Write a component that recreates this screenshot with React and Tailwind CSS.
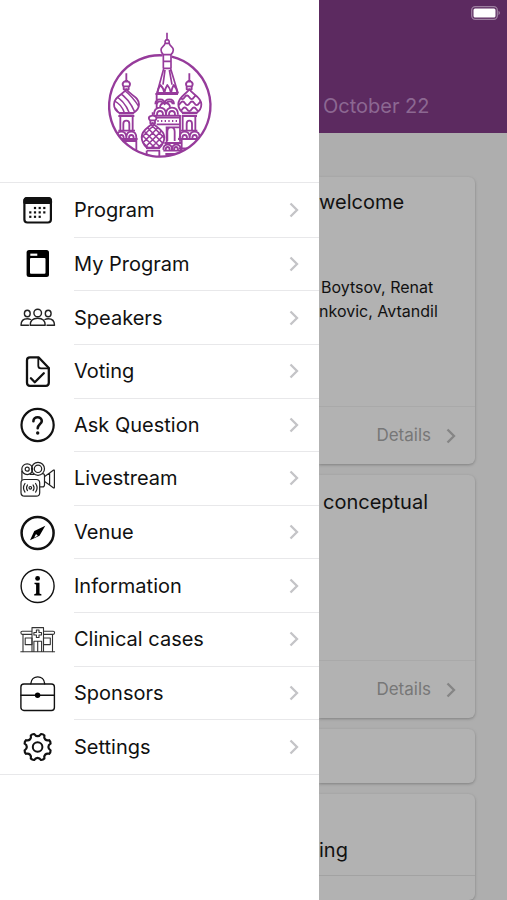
import React from 'react';

// eight rounded teeth around the centre of a 36x36 box
const gearPath = (() => {
  const pts = [];
  const at = (r, deg) => {
    const a = (deg * Math.PI) / 180;
    return `${(17.6 + r * Math.sin(a)).toFixed(2)} ${(18 - r * Math.cos(a)).toFixed(2)}`;
  };
  for (let i = 0; i < 8; i++) {
    const a = i * 45 + 22.5;
    pts.push(`${i === 0 ? 'M' : 'L'}${at(13.4, a - 8)}`);
    pts.push(`Q${at(14.2, a)} ${at(13.4, a + 8)}`);
    pts.push(`C${at(10.2, a + 13)} ${at(10.2, a + 32)} ${at(13.4, a + 37)}`);
  }
  return pts.join('') + 'Z';
})();

function Icon({ children, strokeWidth = 1.5, color = '#111' }) {
  return (
    <svg className="h-9 w-9 shrink-0" viewBox="0 0 36 36" fill="none" stroke={color} strokeWidth={strokeWidth} strokeLinecap="round" strokeLinejoin="round" aria-hidden="true">
      {children}
    </svg>
  );
}

function ProgramIcon() {
  const dots = [[15, 15], [19.7, 15], [24.3, 15], [10.3, 19.4], [15, 19.4], [19.7, 19.4], [24.3, 19.4], [10.3, 23.8], [15, 23.8], [19.7, 23.8]];
  return (
    <Icon strokeWidth={2.2}>
      <rect x="4.4" y="5" width="26.5" height="24.5" rx="3" />
      <path d="M4.4 9.8V8q0-3 3-3H28q3 0 3 3v1.800z" fill="#111" />
      {dots.map(([x, y]) => (
        <rect key={`${x}-${y}`} x={x - 1.1} y={y - 1.1} width="2.2" height="2.2" fill="#111" stroke="none" />
      ))}
    </Icon>
  );
}

function MyProgramIcon() {
  return (
    <Icon>
      <rect x="6.6" y="4" width="22.4" height="27" rx="2.5" fill="#000" stroke="none" />
      <rect x="10" y="12" width="15.5" height="15.7" rx="1" fill="#fff" stroke="none" />
      <rect x="10.3" y="7.6" width="7" height="2.2" fill="#fff" stroke="none" />
    </Icon>
  );
}

function SpeakersIcon() {
  return (
    <Icon strokeWidth={1.4} color="#222">
      <circle cx="17.7" cy="13" r="3.8" />
      <path d="M10.2 25.3c0-4.8 3-7 7.5-7s7.5 2.2 7.5 7z" />
      <ellipse cx="7.3" cy="13.5" rx="2.9" ry="3.3" />
      <ellipse cx="28.2" cy="13.5" rx="2.9" ry="3.3" />
      <path d="M8.5 25.3H1c0-4 2-6.6 6.3-6.6 1.4 0 2.4.3 3.3.8M27 25.3h7.5c0-4-2-6.6-6.3-6.6-1.4 0-2.4.3-3.3.8" />
    </Icon>
  );
}

function VotingIcon() {
  return (
    <Icon strokeWidth={2.3}>
      <path d="M10 3.3h8.5L28.8 14v14.800q0 3-3 3H10q-3 0-3-3V6.300q0-3 3-3z" />
      <path d="M18.300 3.700v8q0 2.700 2.700 2.700h7.800" strokeWidth="1.8" />
      <path d="M10.9 24.3l3.9 4 9-9" />
    </Icon>
  );
}

function QuestionIcon() {
  return (
    <Icon strokeWidth={2.2}>
      <circle cx="17.6" cy="18" r="16.1" />
      <path d="M13.4 14.3c0-5.4 8.4-5.2 8.4-.4 0 3.200-4.100 3.300-4.100 7.400" strokeWidth="2.6" />
      <circle cx="17.7" cy="26" r="1.7" fill="#111" stroke="none" />
    </Icon>
  );
}

function LivestreamIcon() {
  return (
    <Icon strokeWidth={1.2} color="#222">
      <circle cx="7.2" cy="8.2" r="5.4" />
      <circle cx="7.2" cy="8.2" r="2" />
      <circle cx="18" cy="7.8" r="6.5" />
      <circle cx="18" cy="7.8" r="3.7" />
      <path d="M1.9 18.3V10M10.300 13.300h3.800M22.500 12.700q2 0 2 2v9q0 2.200-2 2.200h-2.300" />
      <path d="M24.6 15.4l5-3.300 4-3q.8-.4.8.6v16.600q0 1-.8.6l-4-3-5-3.300M29.600 12.300v11.500" />
      <rect x="1" y="18.5" width="18.7" height="16.7" rx="3.5" />
      <circle cx="10.3" cy="26.8" r="1.3" />
      <path d="M7.500 24q-1.900 2.800 0 5.600M5 22.500q-3 4.300 0 8.600M13.100 24q1.900 2.800 0 5.600M15.600 22.500q3 4.300 0 8.600" />
    </Icon>
  );
}

function VenueIcon() {
  return (
    <Icon strokeWidth={2.5}>
      <circle cx="17.6" cy="18" r="16" />
      <path d="M25.300 10.700L10 25.300l4.300-9.300zM25.300 10.700L19.500 20.800 10 25.300z" fill="#000" stroke="none" />
      <path d="M16 19l1.800 1.800-3.700 2z" fill="#fff" stroke="none" />
    </Icon>
  );
}

function InformationIcon() {
  return (
    <Icon strokeWidth={1.4}>
      <circle cx="17.6" cy="18" r="16.5" />
      <circle cx="17.6" cy="10.4" r="2.4" fill="#000" stroke="none" />
      <path d="M14.500 14.800h5v10.800l1.900.6v1.200h-7.200v-1.200l1.900-.6v-9l-1.600-.6z" fill="#000" stroke="none" />
    </Icon>
  );
}

function ClinicalIcon() {
  return (
    <Icon strokeWidth={1.1} color="#333">
      <path d="M.8 29.700h33.800M12 29.500V5.600h11.500v23.900M12 9.200H2.300q-1.400 0-1.400 1.600t1.400 1.600H12M23.500 9.200h9.700q1.400 0 1.400 1.600t-1.400 1.600h-9.700" />
      <path d="M3 12.600v17M32.500 12.600v17M5.200 16H12v6.600H5.200zM23.500 16h6.800v6.600h-6.800zM13.900 29.500V19.300h7.700v10.200M17.700 19.300v10.200" />
      <path d="M16.400 8H19v2.500h2.500V13H19v2.500h-2.600V13h-2.500v-2.500h2.500z" />
    </Icon>
  );
}

function SponsorsIcon() {
  return (
    <Icon strokeWidth={1.4}>
      <rect x=".9" y="8" width="33.5" height="26.5" rx="3" />
      <path d="M10.800 7.800C11.500-1.400 24-1.400 24.700 7.800M1 19.300h33.300" />
      <circle cx="17.6" cy="19.3" r="2.7" fill="#000" stroke="none" />
    </Icon>
  );
}

function SettingsIcon() {
  return (
    <Icon strokeWidth={2.2}>
      <path d={gearPath} />
      <circle cx="17.6" cy="18" r="4.8" strokeWidth="2" />
    </Icon>
  );
}

const menu = [
  { label: 'Program', icon: ProgramIcon },
  { label: 'My Program', icon: MyProgramIcon },
  { label: 'Speakers', icon: SpeakersIcon },
  { label: 'Voting', icon: VotingIcon },
  { label: 'Ask Question', icon: QuestionIcon },
  { label: 'Livestream', icon: LivestreamIcon },
  { label: 'Venue', icon: VenueIcon },
  { label: 'Information', icon: InformationIcon },
  { label: 'Clinical cases', icon: ClinicalIcon },
  { label: 'Sponsors', icon: SponsorsIcon },
  { label: 'Settings', icon: SettingsIcon },
];

function Chevron({ className }) {
  return (
    <svg className={className} viewBox="0 0 10 16" fill="none" stroke="currentColor" strokeWidth="2.3" aria-hidden="true">
      <path d="M1.500 1.500L8 8l-6.500 6.500" />
    </svg>
  );
}

function Logo() {
  return (
    <svg className="h-[140px] w-[130px]" viewBox="3 0 390 420" fill="none" stroke="#963b9b" strokeWidth="5.5" strokeLinejoin="round" role="img" aria-label="Cathedral">
      <defs>
        <clipPath id="disc"><circle cx="195" cy="243" r="152" /></clipPath>
        <clipPath id="domeLeft"><path d="M97 193c-12 18-37 22-37 45 0 12 6 20 16 26h42c10-6 17-14 17-26 0-23-26-27-38-45z" /></clipPath>
        <clipPath id="domeRight"><path d="M286 193c-10 16-33 22-33 45 0 11 5 19 13 25h42c10-6 14-14 14-25 0-23-26-29-36-45z" /></clipPath>
        <clipPath id="domeFront"><path d="M176 294c-8 12-33 20-33 42 0 14 7 24 15 32h39c8-8 14-18 14-32 0-22-27-30-35-42z" /></clipPath>
      </defs>
      <path d="M206 91A152 152 0 1 0 233 95" strokeWidth="7" />

      <g clipPath="url(#disc)">
        {/* left tower */}
        <path d="M97 193c-12 18-37 22-37 45 0 12 6 20 16 26h42c10-6 17-14 17-26 0-23-26-27-38-45z" />
        <g clipPath="url(#domeLeft)" strokeWidth="4.5">
          <path d="M51 224q32 9 42 45M57 210q34 13 51 59M72 201q33 18 52 64M86 192q31 23 51 57M99 187q23 16 42 38M48 241q20 5 28 28" />
        </g>
        <path d="M75 266h44M79 273v43M116 273v43M73 317h50M88 316v-20q0-9 9-9t9 9v20M73 273h48" />
        <path d="M67 339q0-19 15-19t15 19q0-19 15-19t15 19M75 339q0-9 7-9t7 9M105 339q0-9 7-9t7 9M62 342h69M75 350v40M127 344v44M62 348h66" />

        {/* center tower */}
        <path d="M184 207h68M188 210v42M184 238q0-15 14-15t14 15q0-15 14-15t14 15M180 269q0-21 18-21t18 21q0-21 18-21t18 21" />
        <path d="M189 238q0-9 9-9t9 9M218 238q0-9 9-9t9 9M189 269q0-11 9-11t9 11M225 269q0-11 9-11t9 11M198 248q0-14 15-14t15 14M180 272h78M188 278h72M188 298h72M258 270v80M215 307h44M218 307v48M220 348v-28q0-13 11-13t11 13v28M211 354h50" />
        <path d="M190 288h68" strokeDasharray="4 7" />
        <path d="M208 374q0-15 13-15t13 15q0-15 13-15t13 15M215 374q0-8 6-8t6 8M240 374q0-8 6-8t6 8M208 377h54M214 387h48" />

        {/* right tower */}
        <path d="M286 193c-10 16-33 22-33 45 0 11 5 19 13 25h42c10-6 14-14 14-25 0-23-26-29-36-45z" />
        <g clipPath="url(#domeRight)">
          <path d="M258 217q7 11 14 0 7-11 14 0 7 11 14 0 7-11 14 0M245 235q7 11 14 0 7-11 14 0 7 11 14 0 7-11 14 0 7 11 14 0 7-11 14 0M251 253q7 11 14 0 7-11 14 0 7 11 14 0 7-11 14 0 7 11 14 0" />
        </g>
        <path d="M264 265h46M266 273v43M304 273v43M261 317h49M278 316v-20q0-9 8-9t8 9v20M263 273h46" />
        <path d="M257 339q0-19 15-19t15 19q0-19 15-19t15 19M265 339q0-9 7-9t7 9M295 339q0-9 7-9t7 9M252 342h69M263 344v45M307 350v35M255 370h50" />

        {/* front dome */}
        <path d="M176 294c-8 12-33 20-33 42 0 14 7 24 15 32h39c8-8 14-18 14-32 0-22-27-30-35-42z" fill="#fff" />
        <g clipPath="url(#domeFront)" strokeWidth="4.5">
          <path d="M120 340l60-60M126 354l70-70M136 364l70-70M146 374l70-70M160 380l60-60M178 382l50-50M230 340l-60-60M226 354l-70-70M216 364l-70-70M206 374l-70-70M194 380l-60-60M178 384l-50-50" />
        </g>
        <path d="M156 369h42M158 377h38v18M158 377v17" />
      </g>

      {/* spires */}
      <path d="M168 286q-7-8 0-12 8-4 16 0 7 4 0 12zM169 287v8h14v-8M176 262v10" />
      <path d="M88 184q-5-9 2-14h14q7 5 2 14zM89 185v8h15v-8M92 168h10M97 145v21" />
      <path d="M278 184q-5-9 2-14h12q7 5 2 14zM278 185v8h15v-8M281 168h10M286 145v21" />
      <path d="M208 90v40h23V90M208 109h23M208 89c-4-4-7-8-7-14 0-10 11-11 12-20h13c1 9 12 10 12 20 0 6-3 10-7 14zM214 54q-3-8 5-10 9 2 6 10M219 23v20M209 131l-20 74M230 131l22 74M213 135l-6 44M226 135l8 44" strokeWidth="5" />
      <path d="M190 204q2-13 9-24 10 9 12 24 2-13 9-24 8 9 11 24 2-13 8-24 9 9 12 24z" />
    </svg>
  );
}

function Details() {
  return (
    <a href="#details" className="flex h-[58px] items-center justify-end gap-[15px] border-t border-[#a9a9a9] pr-[19px] text-[17px] text-[#777]">
      Details
      <Chevron className="h-4 w-[10px] text-[#858585]" />
    </a>
  );
}

function Card({ className, children }) {
  return (
    <article className={`flex flex-col rounded-r-md bg-[#b2b2b2] shadow-[0_1px_3px_#808080] ${className}`}>
      {children}
    </article>
  );
}

export default function App() {
  return (
    <div className="flex h-screen overflow-hidden bg-[#aeaeae] font-[Inter,'Liberation_Sans',sans-serif] text-[#111]">
      <aside className="w-[319px] shrink-0 bg-white">
        <div className="flex justify-center pt-[25px] pb-[17px]">
          <Logo />
        </div>
        <nav className="grid h-[593px] auto-rows-fr border-y border-[#e8e8ea] pt-px">
          {menu.map(({ label, icon: MenuIcon }, i) => (
            <a key={label} href="#menu" className="flex items-center gap-[18px] pl-5">
              <MenuIcon />
              <span className={`flex h-full flex-1 items-center justify-between pr-5 text-xl ${i < menu.length - 1 ? 'border-b border-[#e8e8ea]' : ''}`}>
                {label}
                <Chevron className="h-4 w-[10px] text-[#c4c4c7]" />
              </span>
            </a>
          ))}
        </nav>
      </aside>

      <main className="flex min-w-0 flex-1 flex-col overflow-hidden whitespace-nowrap">
        <header className="flex h-[133px] shrink-0 flex-col justify-between bg-[#5c2a60] pt-[6px] pb-3">
          <svg className="mr-[6px] h-[14px] w-[30px] self-end" viewBox="0 0 30 14" aria-hidden="true">
            <rect x=".7" y=".7" width="25.6" height="12.6" rx="3.5" fill="none" stroke="#9d7fa0" strokeWidth="1.3" />
            <rect x="2.5" y="2.5" width="22" height="9" rx="1.5" fill="#fff" />
            <path d="M27.500 4.800q3 2.200 0 4.400z" fill="#9d7fa0" />
          </svg>
          <p className="pl-1 text-xl leading-[30px] text-[#8c6892]">October 22</p>
        </header>
        <section className="flex flex-1 flex-col gap-[11px] pt-11 pr-8">
          <Card className="h-[287px] shrink-0 justify-between">
            <div>
              <h2 className="pt-[10px] text-xl leading-[30px]">welcome</h2>
              <p className="pt-[58px] pl-[2px] text-base leading-6">Boytsov, Renat</p>
              <p className="text-base leading-6">nkovic, Avtandil</p>
            </div>
            <Details />
          </Card>
          <Card className="h-[243px] shrink-0 justify-between">
            <h2 className="pt-3 pl-1 text-xl leading-[30px]">conceptual</h2>
            <Details />
          </Card>
          <Card className="h-[54px] shrink-0" />
          <Card className="flex-1">
            <h2 className="border-b border-[#a2a2a2] pt-[41px] pb-[10px] text-xl leading-[30px]">ing</h2>
          </Card>
        </section>
      </main>
    </div>
  );
}
